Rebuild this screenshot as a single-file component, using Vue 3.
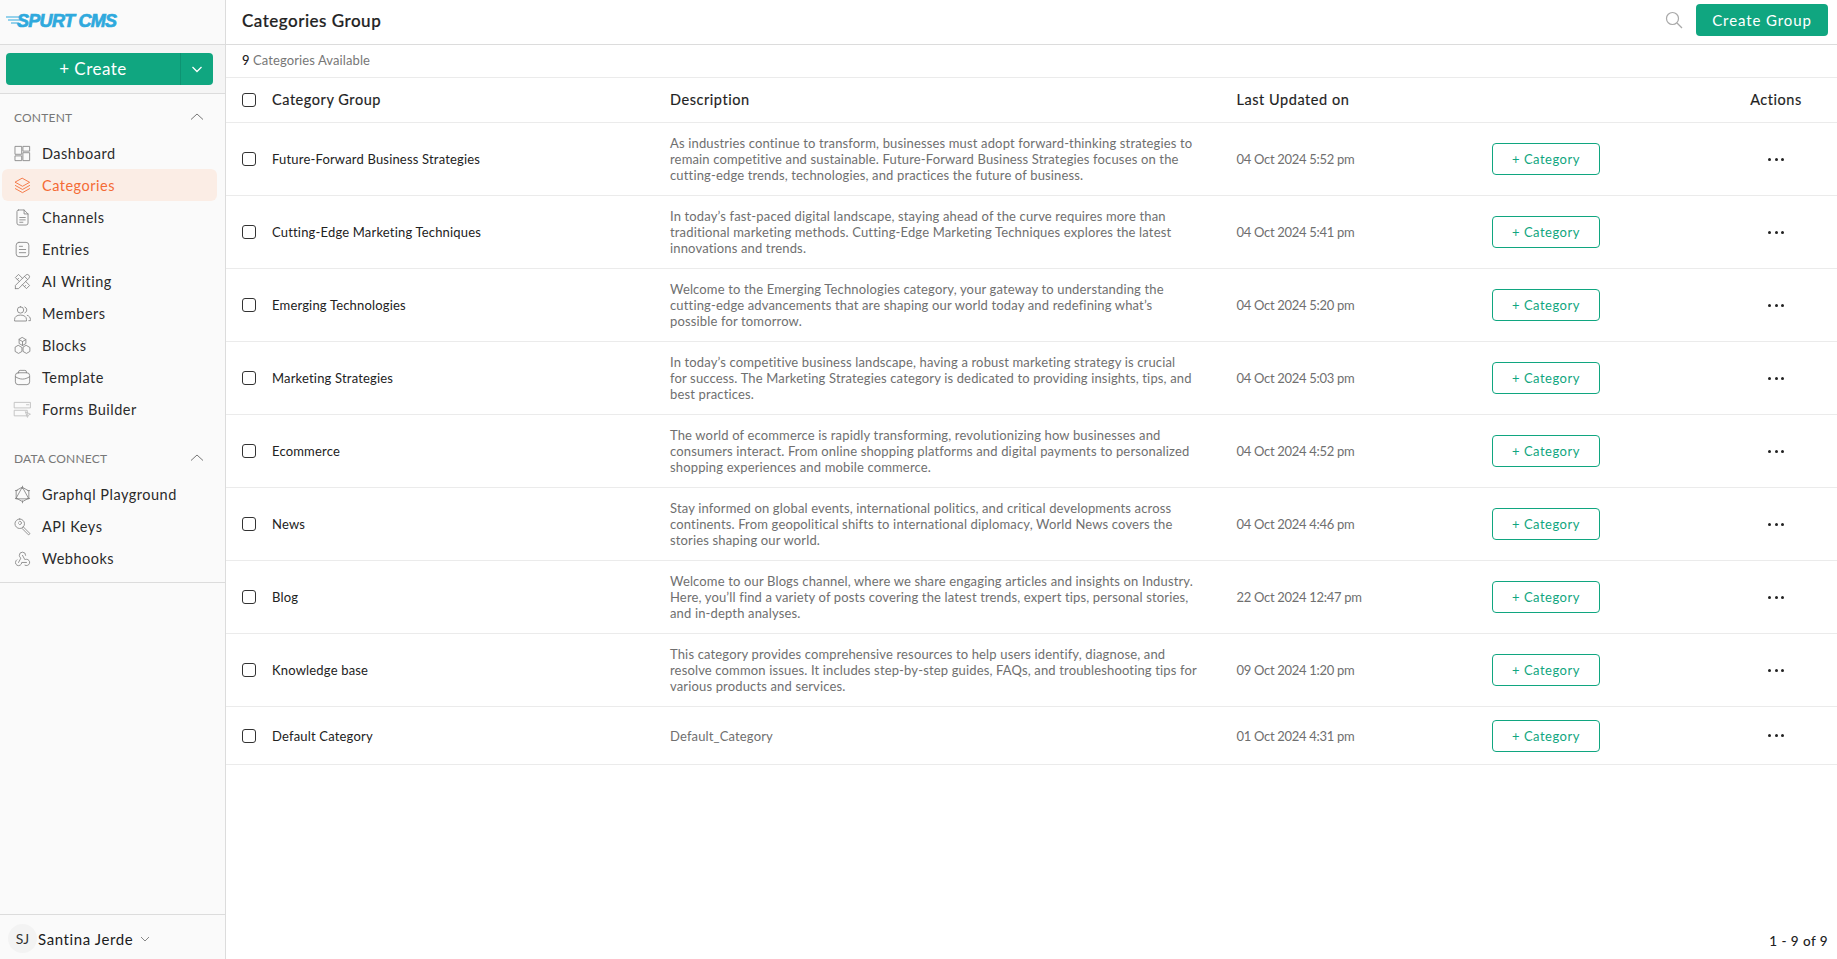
<script setup>
import { ref } from 'vue';

const contentItems = ref([
  { name: 'Dashboard', icon: ['M3 3h8v10H3z', 'M13 3h8v6h-8z', 'M13 11h8v10h-8z', 'M3 15h8v6H3z'] },
  { name: 'Categories', active: true, icon: ['M12 3l9 5-9 5-9-5z', 'M3 12l9 5 9-5', 'M3 16l9 5 9-5'] },
  { name: 'Channels', icon: ['M7 2.500h7l5 5V19a2.500 2.500 0 0 1-2.500 2.500h-9A2.500 2.500 0 0 1 5 19V4.500a2 2 0 0 1 2-2z', 'M14 2.500v5h5', 'M8.500 12h7', 'M8.500 15h7', 'M8.500 18h4'] },
  { name: 'Entries', icon: ['M7.500 3h9A3.500 3.500 0 0 1 20 6.500v11a3.500 3.500 0 0 1-3.500 3.500h-9A3.500 3.500 0 0 1 4 17.500v-11A3.500 3.500 0 0 1 7.500 3z', 'M8 8h4', 'M8 12h8', 'M8 16h8'] },
  { name: 'AI Writing', icon: ['M3 21h4l13-13a1.500 1.500 0 0 0-4-4L3 17v4', 'M14.500 5.500l4 4', 'M12 8L7 3 3 7l5 5', 'M7 8L5.500 9.500', 'M16 12l5 5-4 4-5-5', 'M16 17l-1.500 1.500'] },
  { name: 'Members', icon: ['M9.500 3.500a4 4 0 1 1 0 8 4 4 0 0 1 0-8z', 'M2 21v-1.500c0-3.500 3-5.500 7.500-5.500s7.500 2 7.500 5.500V21z', 'M15 3.800a4 4 0 0 1 0 7.400', 'M18 14.300c2.500.8 4 2.700 4 5.200V21h-2'] },
  { name: 'Blocks', icon: ['M12 2l4.300 2.500v5L12 12 7.700 9.500v-5z', 'M7 12l4.300 2.500v5L7 22l-4.300-2.500v-5z', 'M17 12l4.300 2.500v5L17 22l-4.300-2.500v-5z', 'M7.700 4.500L12 7l4.300-2.500', 'M12 7v5'] },
  { name: 'Template', icon: ['M6.500 6h11A3.500 3.500 0 0 1 21 9.500v8a3.500 3.500 0 0 1-3.500 3.500h-11A3.500 3.500 0 0 1 3 17.500v-8A3.500 3.500 0 0 1 6.500 6z', 'M7 6V5a2 2 0 0 1 2-2h6a2 2 0 0 1 2 2v1', 'M3 11c3 2 6 3 9 3s6-1 9-3'], },
  { name: 'Forms Builder', faint: true, icon: ['M2 3h20v7H2z', 'M2 13h16v7H2z', 'M17 6h3', 'M16 15l6 3-2.500 1-1 2.500z'] },
]);

const dataItems = ref([
  { name: 'Graphql Playground', icon: ['M12 3l8 14.500H4z', 'M12 3l8 4.500v9l-8 4.500-8-4.500v-9z', 'M12 1.500v3', 'M3 7h2.500', 'M18.500 7H21', 'M3 17h2.500', 'M18.500 17H21', 'M12 20v2.500'] },
  { name: 'API Keys', icon: ['M8.500 2.500a6 6 0 1 1 0 12 6 6 0 0 1 0-12z', 'M13 12.500l8.500 8.500-2 1.500-8-8', 'M7 6.500a2 2 0 1 1 0 2'] },
  { name: 'Webhooks', icon: ['M4.900 13.600A4 4 0 1 0 11 17h6', 'M15.100 20.500A4 4 0 1 0 17 13c-.7 0-1.400.2-2 .5l-3-5.500', 'M16 8a4 4 0 1 0-8 0c0 1.500.8 2.800 2 3.500L7 17'] },
]);

const groups = ref([
  { name: 'Future-Forward Business Strategies', date: '04 Oct 2024 5:52 pm', lines: ['As industries continue to transform, businesses must adopt forward-thinking strategies to', 'remain competitive and sustainable. Future-Forward Business Strategies focuses on the', 'cutting-edge trends, technologies, and practices the future of business.'] },
  { name: 'Cutting-Edge Marketing Techniques', date: '04 Oct 2024 5:41 pm', lines: ['In today’s fast-paced digital landscape, staying ahead of the curve requires more than', 'traditional marketing methods. Cutting-Edge Marketing Techniques explores the latest', 'innovations and trends.'] },
  { name: 'Emerging Technologies', date: '04 Oct 2024 5:20 pm', lines: ['Welcome to the Emerging Technologies category, your gateway to understanding the', 'cutting-edge advancements that are shaping our world today and redefining what’s', 'possible for tomorrow.'] },
  { name: 'Marketing Strategies', date: '04 Oct 2024 5:03 pm', lines: ['In today’s competitive business landscape, having a robust marketing strategy is crucial', 'for success. The Marketing Strategies category is dedicated to providing insights, tips, and', 'best practices.'] },
  { name: 'Ecommerce', date: '04 Oct 2024 4:52 pm', lines: ['The world of ecommerce is rapidly transforming, revolutionizing how businesses and', 'consumers interact. From online shopping platforms and digital payments to personalized', 'shopping experiences and mobile commerce.'] },
  { name: 'News', date: '04 Oct 2024 4:46 pm', lines: ['Stay informed on global events, international politics, and critical developments across', 'continents. From geopolitical shifts to international diplomacy, World News covers the', 'stories shaping our world.'] },
  { name: 'Blog', date: '22 Oct 2024 12:47 pm', lines: ['Welcome to our Blogs channel, where we share engaging articles and insights on Industry.', 'Here, you’ll find a variety of posts covering the latest trends, expert tips, personal stories,', 'and in-depth analyses.'] },
  { name: 'Knowledge base', date: '09 Oct 2024 1:20 pm', lines: ['This category provides comprehensive resources to help users identify, diagnose, and', 'resolve common issues. It includes step-by-step guides, FAQs, and troubleshooting tips for', 'various products and services.'] },
  { name: 'Default Category', date: '01 Oct 2024 4:31 pm', short: true, lines: ['Default_Category'] },
]);
</script>

<template>
  <div class="page">
    <aside class="sidebar">
      <div class="logo">
        <svg class="logo-lines" width="14" height="12" viewBox="0 0 14 12">
          <path d="M0 2h14M2 5h12M5 8h8" />
        </svg>
        <span class="logo-text">SPURT CMS</span>
      </div>

      <div class="create-row">
        <div class="create-btn">
          <span class="create-label">+ Create</span>
          <span class="create-arrow">
            <svg width="12" height="12" viewBox="0 0 12 12"><path d="M1.500 4l4.500 4.500L10.500 4" /></svg>
          </span>
        </div>
      </div>

      <div class="nav-head first">
        <span>CONTENT</span>
        <svg width="14" height="14" viewBox="0 0 14 14"><path d="M1 9.500l6-5.500 6 5.500" /></svg>
      </div>
      <nav>
        <a v-for="item in contentItems" :key="item.name" class="nav-item" :class="{ active: item.active, faint: item.faint }">
          <svg class="nav-icon" width="19" height="19" viewBox="0 0 24 24"><path v-for="d in item.icon" :key="d" :d="d" /></svg>
          <span>{{ item.name }}</span>
        </a>
      </nav>

      <div class="nav-head">
        <span>DATA CONNECT</span>
        <svg width="14" height="14" viewBox="0 0 14 14"><path d="M1 9.500l6-5.500 6 5.500" /></svg>
      </div>
      <nav class="nav-last">
        <a v-for="item in dataItems" :key="item.name" class="nav-item">
          <svg class="nav-icon" width="19" height="19" viewBox="0 0 24 24"><path v-for="d in item.icon" :key="d" :d="d" /></svg>
          <span>{{ item.name }}</span>
        </a>
      </nav>

      <div class="user">
        <span class="avatar">SJ</span>
        <span class="user-name">Santina Jerde</span>
        <svg width="10" height="10" viewBox="0 0 10 10"><path d="M1 3l4 4 4-4" /></svg>
      </div>
    </aside>

    <main class="main">
      <header class="topbar">
        <h1>Categories Group</h1>
        <div class="top-actions">
          <svg class="search" width="18" height="18" viewBox="0 0 18 18">
            <circle cx="7.500" cy="7.500" r="6" />
            <path d="M12 12l5 5" />
          </svg>
          <button class="primary">Create Group</button>
        </div>
      </header>

      <div class="available"><b>9</b> Categories Available</div>

      <div class="row head">
        <input type="checkbox" class="check" />
        <span>Category Group</span>
        <span>Description</span>
        <span>Last Updated on</span>
        <span></span>
        <span class="center">Actions</span>
      </div>

      <div v-for="group in groups" :key="group.name" class="row" :class="{ short: group.short }">
        <input type="checkbox" class="check" />
        <span class="name">{{ group.name }}</span>
        <div class="desc">
          <span v-for="line in group.lines" :key="line">{{ line }}</span>
        </div>
        <span class="date">{{ group.date }}</span>
        <span><button class="outline">+ Category</button></span>
        <span class="dots center"><i></i><i></i><i></i></span>
      </div>

      <div class="pager">1 - 9 of 9</div>
    </main>
  </div>
</template>

<style>
html, body {
  margin: 0;
  background: #fff;
}
</style>

<style scoped>
.page {
  display: flex;
  height: 959px;
  overflow: hidden;
  font-family: "Lato", "Open Sans", sans-serif;
  color: #1c1c1c;
}

.sidebar {
  width: 225px;
  flex: none;
  display: flex;
  flex-direction: column;
  background: #fafafa;
  border-right: 1px solid #dcdcdc;
}

.logo {
  height: 45px;
  box-sizing: border-box;
  border-bottom: 1px solid #dcdcdc;
  display: flex;
  align-items: center;
  padding: 0 0 2px 6px;
  flex: none;
}

.logo-lines {
  margin-right: -3px;
  fill: none;
  stroke: #2fa9dd;
  stroke-width: 1;
}

.logo-text {
  font-family: "Liberation Sans", sans-serif;
  font-size: 18px;
  font-weight: 700;
  font-style: italic;
  color: #2fa9dd;
  letter-spacing: -0.7px;
  -webkit-text-stroke: 0.7px #2fa9dd;
}

.create-row {
  height: 49px;
  box-sizing: border-box;
  background: #f5f5f5;
  border-bottom: 1px solid #dcdcdc;
  padding: 8px 12px 0 6px;
  flex: none;
}

.create-btn {
  height: 32px;
  display: flex;
  border-radius: 4px;
  background: #10a680;
  color: #fff;
  font-size: 17px;
  line-height: 32px;
  letter-spacing: 0.5px;
}

.create-label {
  flex: 1;
  text-align: center;
}

.create-arrow {
  width: 32px;
  border-left: 1px solid #0e9372;
  display: flex;
  align-items: center;
  justify-content: center;
}

.create-arrow svg {
  fill: none;
  stroke: #fff;
  stroke-width: 1.3;
}

.nav-head {
  display: flex;
  justify-content: space-between;
  align-items: center;
  padding: 0 14px;
  height: 20px;
  margin: 23px 7px 10px 0;
  font-size: 12px;
  color: #777;
  letter-spacing: 0.2px;
}

.nav-head.first {
  margin-top: 13px;
}

.nav-head svg {
  fill: none;
  stroke: #777;
  stroke-width: 1;
}

.nav-item {
  display: flex;
  align-items: center;
  gap: 10.500px;
  height: 32px;
  margin: 0 8px 0 2px;
  padding-left: 10.500px;
  border-radius: 6px;
  font-size: 14.500px;
  color: #2a2a2a;
  letter-spacing: 0.5px;
}

.nav-item.active {
  background: #fbede5;
  color: #f46b35;
}

.nav-icon {
  flex: none;
  fill: none;
  stroke: #858585;
  stroke-width: 1.100;
  stroke-linejoin: round;
  stroke-linecap: round;
}

.nav-item.active .nav-icon {
  stroke: #f46b35;
}

.nav-item.faint .nav-icon {
  stroke: #bdbdbd;
}

.nav-last {
  padding-bottom: 8px;
  border-bottom: 1px solid #dcdcdc;
}

.user {
  margin-top: auto;
  height: 45px;
  box-sizing: border-box;
  border-top: 1px solid #dcdcdc;
  display: flex;
  align-items: center;
  padding: 3px 0 0 8px;
  font-size: 15px;
}

.avatar {
  width: 29px;
  height: 29px;
  border-radius: 50%;
  background: #f3f3f3;
  display: flex;
  align-items: center;
  justify-content: center;
  font-size: 14px;
  color: #333;
  margin-right: 1px;
}

.user-name {
  letter-spacing: 0.6px;
  margin-right: 7px;
}

.user svg {
  fill: none;
  stroke: #888;
  stroke-width: 1;
}

.main {
  flex: 1;
  min-width: 0;
  display: flex;
  flex-direction: column;
  position: relative;
}

.topbar {
  height: 45px;
  box-sizing: border-box;
  border-bottom: 1px solid #dcdcdc;
  display: flex;
  justify-content: space-between;
  align-items: center;
  padding: 0 9px 4px 16px;
  flex: none;
}

h1 {
  margin: 0;
  font-size: 17px;
  font-weight: 500;
  color: #222;
  letter-spacing: 0.5px;
  -webkit-text-stroke: 0.2px #222;
}

.top-actions {
  display: flex;
  align-items: center;
  gap: 13px;
}

.search {
  fill: none;
  stroke: #a9a9a9;
  stroke-width: 1.200;
}

button {
  font-family: inherit;
  cursor: pointer;
}

.primary {
  width: 132px;
  height: 32px;
  border: none;
  border-radius: 4px;
  background: #10a680;
  color: #fff;
  font-size: 15px;
  letter-spacing: 0.9px;
  padding-bottom: 2px;
}

.available {
  height: 33px;
  box-sizing: border-box;
  border-bottom: 1px solid #ebebeb;
  padding-left: 16px;
  line-height: 31px;
  font-size: 13px;
  color: #777;
  letter-spacing: 0.1px;
  flex: none;
}

.available b {
  color: #222;
  font-weight: 500;
}

.row {
  display: grid;
  grid-template-columns: 30px 398px 566.500px 255.500px 234px 100px;
  align-items: center;
  height: 73px;
  box-sizing: border-box;
  padding-left: 16px;
  border-bottom: 1px solid #ebebeb;
  flex: none;
}

.row.head {
  height: 45px;
  font-size: 14.500px;
  color: #222;
  letter-spacing: 0.55px;
}

.row.head span {
  padding-bottom: 2px;
  -webkit-text-stroke: 0.15px #222;
}

.row.short {
  height: 58px;
}

.check {
  appearance: none;
  width: 14px;
  height: 14px;
  margin: 0;
  border: 1px solid #333;
  border-radius: 3px;
  background: #fff;
}

.center {
  text-align: center;
}

.name {
  font-size: 13px;
  color: #222;
  letter-spacing: 0.18px;
}

.desc {
  font-size: 13px;
  line-height: 16px;
  color: #6f6f6f;
  letter-spacing: 0.15px;
}

.desc span {
  display: block;
  white-space: nowrap;
}

.date {
  font-size: 13px;
  color: #6f6f6f;
  letter-spacing: -0.3px;
}

.outline {
  display: block;
  width: 108px;
  height: 32px;
  border: 1px solid #10a680;
  border-radius: 4px;
  background: #fff;
  color: #10a680;
  font-size: 13px;
  letter-spacing: 0.5px;
}

.dots {
  display: flex;
  justify-content: center;
  gap: 3.500px;
}

.dots i {
  width: 3px;
  height: 3px;
  border-radius: 50%;
  background: #222;
}

.pager {
  position: absolute;
  right: 9px;
  bottom: 10px;
  font-size: 13.500px;
  font-weight: 500;
  color: #222;
  letter-spacing: 0.45px;
}
</style>
